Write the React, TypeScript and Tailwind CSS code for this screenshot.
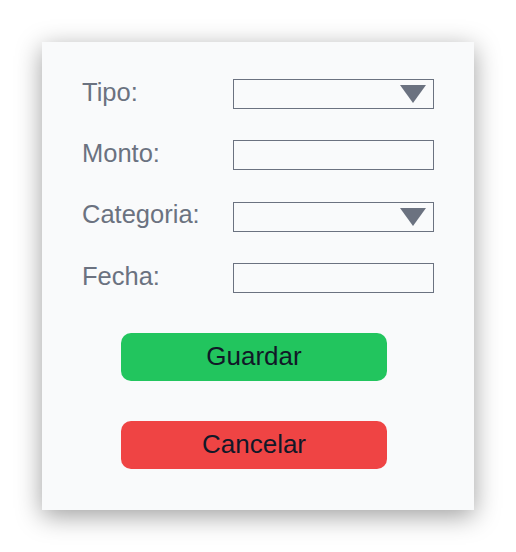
const fields = [
  { label: "Tipo:", select: true },
  { label: "Monto:", select: false },
  { label: "Categoria:", select: true },
  { label: "Fecha:", select: false },
];

export default function App() {
  return (
    <div
      className="w-[516px] h-[552px] bg-white p-[42px]"
      style={{ fontFamily: '"Liberation Sans", Arial, sans-serif' }}
    >
      <div className="w-[432px] h-[468px] bg-[#f9fafb] shadow-[0_6px_24px_rgba(0,0,0,0.38)] pt-[37px] px-10">
        <div className="flex flex-col gap-[31.3px]">
          {fields.map((f) => (
            <div key={f.label} className="flex items-center h-[30px]">
              <span className="w-[151px] text-[25.5px] leading-none text-[#6b7280] pb-[3px]">
                {f.label}
              </span>
              <div className="w-[201px] h-[30px] border border-[#6b7280] flex items-center justify-end pr-[7px]">
                {f.select && (
                  <svg width="26" height="18" viewBox="0 0 26 18">
                    <polygon points="0,0 26,0 13,18" fill="#6b7280" />
                  </svg>
                )}
              </div>
            </div>
          ))}
        </div>
        <div className="flex flex-col gap-10 mt-10 ml-[39px]">
          <button className="w-[266px] h-[48px] rounded-[10px] bg-[#22c55e] text-[#111827] text-[26px]">
            Guardar
          </button>
          <button className="w-[266px] h-[48px] rounded-[10px] bg-[#ef4444] text-[#111827] text-[26px]">
            Cancelar
          </button>
        </div>
      </div>
    </div>
  );
}
